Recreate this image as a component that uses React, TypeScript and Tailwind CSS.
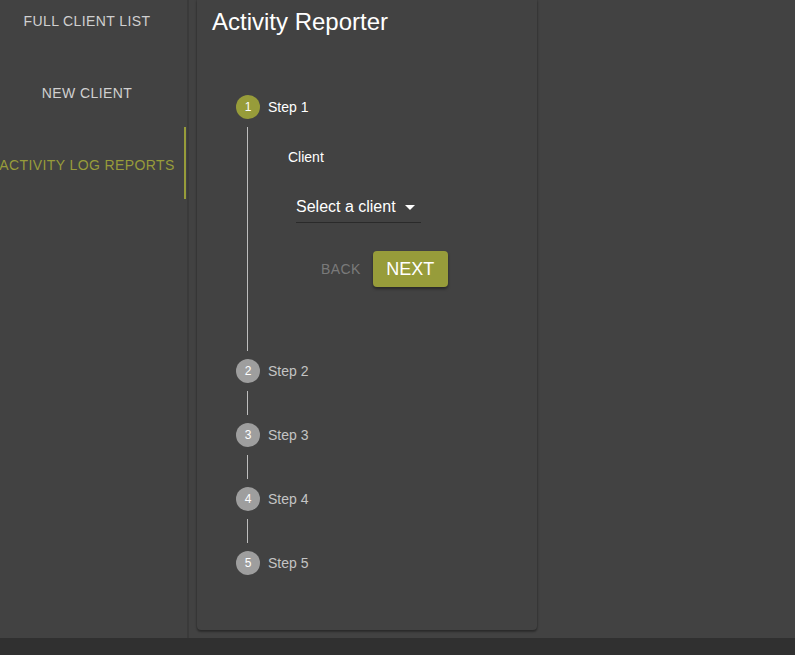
import React from "react";

const font = { fontFamily: '"Liberation Sans", Arial, sans-serif' };

function Tab({ label, active }: { label: string; active?: boolean }) {
  return (
    <div className="relative h-[72px] flex items-center justify-center pr-[13px] overflow-visible">
      <span
        className={`whitespace-nowrap text-[14px] tracking-[0.4px] uppercase ${active ? "text-[#979c3a]" : "text-[#d0d0d0]"}`}
      >
        {label}
      </span>
      {active && <div className="absolute right-[1px] top-[-2px] h-[72px] w-[2px] bg-[#979c3a]" />}
    </div>
  );
}

function StepHead({ n, active }: { n: number; active?: boolean }) {
  return (
    <div className="flex items-center h-[24px]">
      <div
        className={`w-[24px] h-[24px] rounded-full flex items-center justify-center text-[12px] text-white ${active ? "bg-[#979c3a]" : "bg-[#9e9e9e]"}`}
      >
        {n}
      </div>
      <span className={`ml-[8px] text-[14px] ${active ? "text-white" : "text-[#c4c4c4]"}`}>Step {n}</span>
    </div>
  );
}

function Connector({ h }: { h: number }) {
  return (
    <div className="ml-[11px] py-[8px]">
      <div className="w-[1px] bg-[#bdbdbd]" style={{ height: h }} />
    </div>
  );
}

export default function App() {
  return (
    <div className="w-[795px] h-[655px] flex flex-col bg-[#424242] overflow-hidden" style={font}>
      <div className="flex-1 flex min-h-0">
        <div className="w-[189px] shrink-0 border-r-2 border-[#3a3a3a] overflow-hidden">
          <div className="-mt-[15px]">
            <Tab label="Full Client List" />
            <Tab label="New Client" />
            <Tab label="Activity Log Reports" active />
          </div>
        </div>
        <div className="pl-[8px] pb-[8px] flex">
          <div className="w-[340px] h-full bg-[#424242] rounded-b-[4px] shadow-[0_2px_2px_rgba(0,0,0,0.3),1px_0_2px_rgba(0,0,0,0.12),-1px_0_2px_rgba(0,0,0,0.12)]">
            <div className="pl-[15px] pt-[8px] text-[24px] leading-[28px] text-white">Activity Reporter</div>
            <div className="pl-[39px] pt-[59px]">
              <StepHead n={1} active />
              <div className="ml-[11px] mt-[8px] mb-[8px] border-l border-[#bdbdbd] h-[224px] pl-[40px]">
                <div className="pt-[22px] text-[14px] text-white leading-[16px]">Client</div>
                <div className="ml-[8px] mt-[32px] w-[125px] border-b border-[#2a2a2a] pb-[6px] flex items-center">
                  <span className="text-[16px] text-white leading-[19px]">Select a client</span>
                  <svg width="10" height="5" viewBox="0 0 10 5" className="ml-[9px] mt-[1px]">
                    <path d="M0 0 L10 0 L5 5 Z" fill="#ffffff" />
                  </svg>
                </div>
                <div className="mt-[28px] ml-[33px] flex items-center">
                  <span className="text-[14px] text-[#7a7a7a] tracking-[0.4px]">BACK</span>
                  <div className="ml-[12px] w-[75px] h-[36px] rounded-[4px] bg-[#979c3a] flex items-center justify-center text-[18px] text-white shadow-[0_2px_3px_rgba(0,0,0,0.4)]">
                    NEXT
                  </div>
                </div>
              </div>
              <StepHead n={2} />
              <Connector h={24} />
              <StepHead n={3} />
              <Connector h={24} />
              <StepHead n={4} />
              <Connector h={24} />
              <StepHead n={5} />
            </div>
          </div>
        </div>
      </div>
      <div className="h-[17px] bg-[#303030] shrink-0" />
    </div>
  );
}
